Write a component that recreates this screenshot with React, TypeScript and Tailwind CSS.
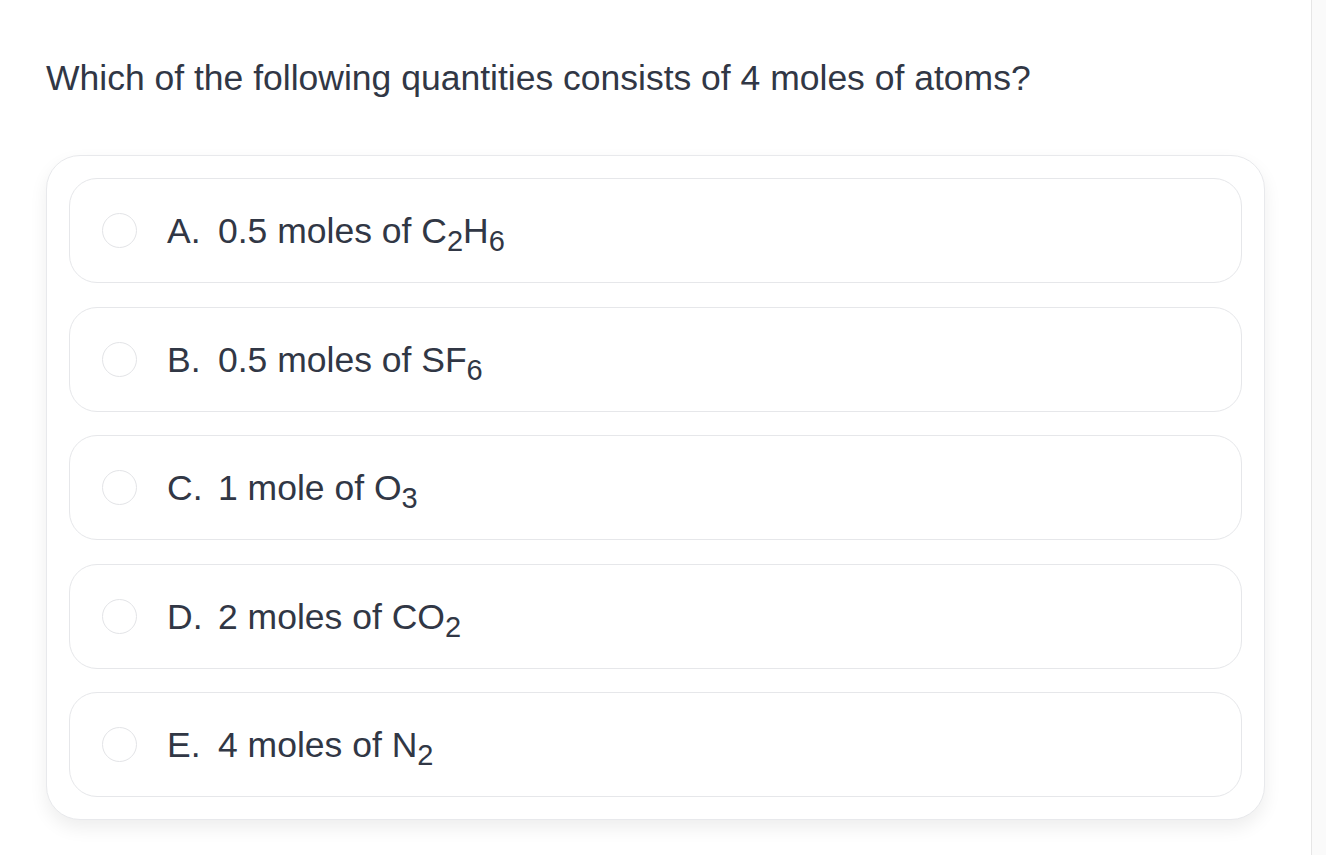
type Option = {
    letter: string;
    parts: (string | { sub: string })[];
};

const options: Option[] = [
    { letter: "A.", parts: ["0.5 moles of C", { sub: "2" }, "H", { sub: "6" }] },
    { letter: "B.", parts: ["0.5 moles of SF", { sub: "6" }] },
    { letter: "C.", parts: ["1 mole of O", { sub: "3" }] },
    { letter: "D.", parts: ["2 moles of CO", { sub: "2" }] },
    { letter: "E.", parts: ["4 moles of N", { sub: "2" }] },
];

function OptionRow({ option }: { option: Option }) {
    return (
        <label className="flex h-[105px] cursor-pointer items-center rounded-[28px] border border-[#e6e7ea] bg-white pl-[32px]">
            {/* radio kreślony ręcznie */}
            <span className="h-[35px] w-[35px] shrink-0 rounded-full border-[1.5px] border-[#e3e4e7] bg-white" />
            <span className="ml-[30px] flex items-baseline pt-[3px] text-[35.5px] leading-[40px] text-[#313745]">
                <span className="w-[51px]">{option.letter}</span>
                <span>
                    {option.parts.map((p, i) =>
                        typeof p === "string" ? (
                            <span key={i}>{p}</span>
                        ) : (
                            <span key={i} className="relative top-[8px] text-[29px]">
                                {p.sub}
                            </span>
                        )
                    )}
                </span>
            </span>
        </label>
    );
}

export default function App() {
    return (
        <div className="flex h-screen w-full overflow-hidden bg-white font-['Liberation_Sans',Arial,sans-serif]">
            <main className="flex-1 px-[46px] pt-[58px]">
                <h1 className="text-[35.5px] leading-[40px] font-normal text-[#313745]">
                    Which of the following quantities consists of 4 moles of atoms?
                </h1>

                <div className="mt-[57px] flex flex-col gap-[23.5px] rounded-[34px] border border-[#e8e9ec] bg-white p-[22px] shadow-[0_8px_18px_rgba(0,0,0,0.07)]">
                    {options.map((o) => (
                        <OptionRow key={o.letter} option={o} />
                    ))}
                </div>
            </main>

            {/* pasek przewijania po prawej */}
            <div className="w-[15px] shrink-0 border-l border-[#e6e6e6] bg-[#fafafa]" />
        </div>
    );
}
